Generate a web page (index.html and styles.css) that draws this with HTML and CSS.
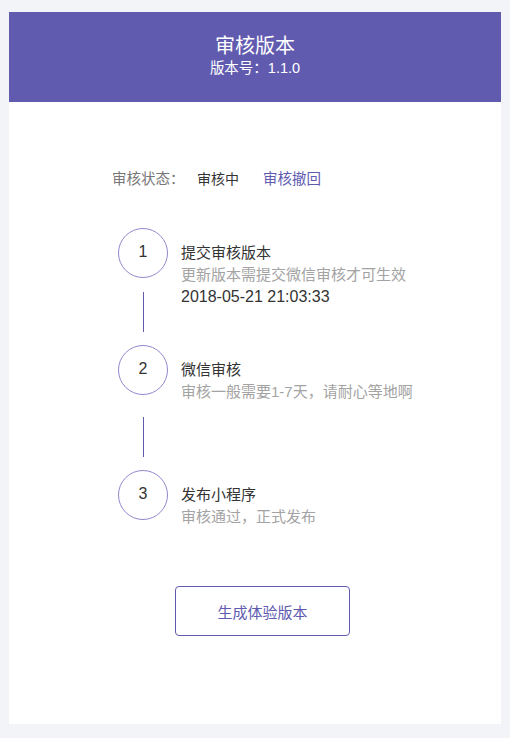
FILE: index.html
```html
<!DOCTYPE html>
<html lang="zh-CN">
<head>
<meta charset="utf-8">
<title>审核版本</title>
<link rel="stylesheet" href="styles.css">
</head>
<body>
<div class="card">
  <div class="header">
    <div class="header-title">审核版本</div>
    <div class="header-sub">版本号：1.1.0</div>
  </div>
  <div class="status">
    <span class="status-label">审核状态：</span>
    <span class="status-value">审核中</span>
    <span class="status-link">审核撤回</span>
  </div>
  <div class="steps">
    <div class="step">
      <div class="step-left">
        <div class="circle">1</div>
        <div class="connector connector-a"></div>
      </div>
      <div class="step-body">
        <div class="step-title">提交审核版本</div>
        <div class="step-desc">更新版本需提交微信审核才可生效</div>
        <div class="step-date">2018-05-21 21:03:33</div>
      </div>
    </div>
    <div class="step">
      <div class="step-left">
        <div class="circle">2</div>
        <div class="connector connector-b"></div>
      </div>
      <div class="step-body">
        <div class="step-title">微信审核</div>
        <div class="step-desc">审核一般需要1-7天，请耐心等地啊</div>
      </div>
    </div>
    <div class="step step-last">
      <div class="step-left">
        <div class="circle">3</div>
      </div>
      <div class="step-body">
        <div class="step-title">发布小程序</div>
        <div class="step-desc">审核通过，正式发布</div>
      </div>
    </div>
  </div>
  <div class="actions">
    <button class="btn">生成体验版本</button>
  </div>
</div>
</body>
</html>
```
FILE: styles.css
```css
* { box-sizing: border-box; }
html, body { margin: 0; }
body {
  background: #f3f4f8;
  padding: 12px 9px 14px;
  font-family: "Liberation Sans", "Noto Sans CJK SC", sans-serif;
  color: #333;
}
.card {
  background: #fff;
  height: 712px;
}
.header {
  height: 90px;
  background: #615bb0;
  color: #fff;
  text-align: center;
  padding-top: 22px;
}
.header-title {
  font-size: 20px;
  line-height: 24px;
}
.header-sub {
  font-size: 14.5px;
  line-height: 20px;
}
.status {
  margin-top: 67px;
  padding-left: 103px;
  display: flex;
  align-items: baseline;
  line-height: 20px;
}
.status-label {
  font-size: 14.5px;
  color: #777;
  width: 85px;
}
.status-value {
  font-size: 14px;
  color: #333;
  width: 66px;
}
.status-link {
  font-size: 14.5px;
  color: #615bb0;
}
.steps {
  margin-top: 39px;
  padding-left: 109px;
}
.step {
  display: flex;
  align-items: flex-start;
  margin-bottom: 13px;
}
.step-last { margin-bottom: 0; }
.step-left {
  width: 50px;
  display: flex;
  flex-direction: column;
  align-items: center;
}
.circle {
  width: 50px;
  height: 50px;
  border: 1.5px solid #8f88cc;
  border-radius: 50%;
  display: flex;
  align-items: center;
  justify-content: center;
  font-size: 16px;
  line-height: 20px;
  padding-bottom: 2px;
  color: #333;
}
.connector {
  width: 1px;
  height: 40px;
  background: #615bb0;
}
.connector-a { margin-top: 14px; }
.connector-b { margin-top: 22px; }
.step-body {
  margin-left: 13px;
  padding-top: 14px;
  font-size: 15px;
  line-height: 22px;
}
.step-title { color: #333; }
.step-desc { color: #a3a3a3; }
.step-date { color: #333; font-size: 16px; }
.actions {
  margin-top: 58px;
  padding-left: 166px;
}
.btn {
  width: 175px;
  height: 50px;
  border: 1px solid #615bb0;
  border-radius: 4px;
  background: #fff;
  color: #615bb0;
  font-family: "Liberation Sans", "Noto Sans CJK SC", sans-serif;
  font-size: 15px;
  padding: 0;
}
```
